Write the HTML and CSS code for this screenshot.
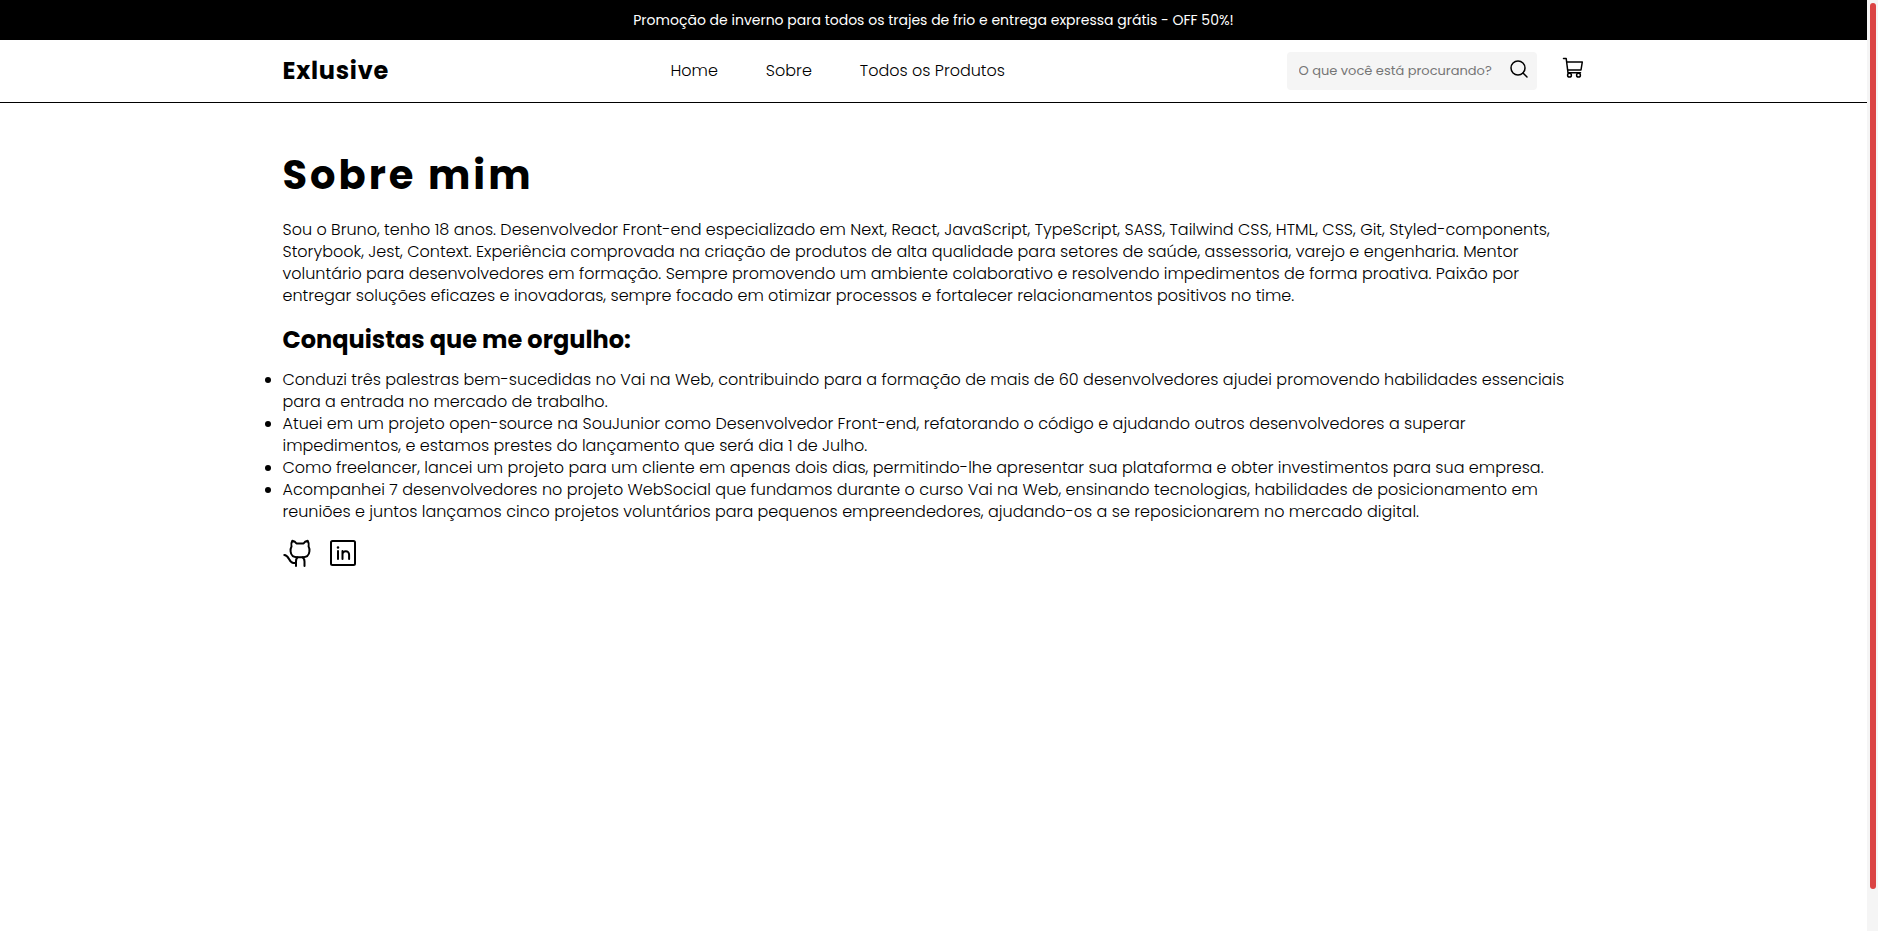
FILE: index.html
```html
<!DOCTYPE html>
<html lang="pt-BR">
<head>
<meta charset="utf-8">
<meta name="viewport" content="width=device-width, initial-scale=1">
<title>Exlusive - Sobre mim</title>
<link rel="stylesheet" href="styles.css">
</head>
<body>
<div class="page">
  <p class="promo">Promoção de inverno para todos os trajes de frio e entrega expressa grátis - OFF 50%!</p>
  <header class="header">
    <div class="container header-row">
      <a class="logo" href="#">Exlusive</a>
      <nav class="nav" aria-label="Principal">
        <a href="#">Home</a>
        <a href="#">Sobre</a>
        <a href="#">Todos os Produtos</a>
      </nav>
      <div class="actions">
        <form class="search" role="search">
          <input class="search-input" type="search" aria-label="Buscar produtos" placeholder="O que você está procurando?">
          <button class="icon-button" type="button" aria-label="Buscar">
            <svg width="24" height="24" viewBox="0 0 24 24" fill="none" stroke="currentColor" stroke-width="1.5" stroke-linecap="round" stroke-linejoin="round"><circle cx="11" cy="10" r="7"/><path d="M16 15l4 4"/></svg>
          </button>
        </form>
        <a class="cart" href="#" aria-label="Carrinho">
          <svg width="24" height="24" viewBox="0 0 24 24" fill="none" stroke="currentColor" stroke-width="1.5" stroke-linecap="round" stroke-linejoin="round"><path d="M2.500 2.500H5.200L7 16.800H19.500"/><path d="M5.700 6H21.300L20 14H6.700"/><circle cx="8.500" cy="19.200" r="1.900"/><circle cx="17.500" cy="19.200" r="1.900"/></svg>
        </a>
      </div>
    </div>
  </header>
  <main class="container about">
    <h1 class="title">Sobre mim</h1>
    <p class="bio">Sou o Bruno, tenho 18 anos. Desenvolvedor Front-end especializado em Next, React, JavaScript, TypeScript, SASS, Tailwind CSS, HTML, CSS, Git, Styled-components, Storybook, Jest, Context. Experiência comprovada na criação de produtos de alta qualidade para setores de saúde, assessoria, varejo e engenharia. Mentor voluntário para desenvolvedores em formação. Sempre promovendo um ambiente colaborativo e resolvendo impedimentos de forma proativa. Paixão por entregar soluções eficazes e inovadoras, sempre focado em otimizar processos e fortalecer relacionamentos positivos no time.</p>
    <h2 class="subtitle">Conquistas que me orgulho:</h2>
    <ul class="achievements">
      <li>Conduzi três palestras bem-sucedidas no Vai na Web, contribuindo para a formação de mais de 60 desenvolvedores ajudei promovendo habilidades essenciais para a entrada no mercado de trabalho.</li>
      <li>Atuei em um projeto open-source na SouJunior como Desenvolvedor Front-end, refatorando o código e ajudando outros desenvolvedores a superar impedimentos, e estamos prestes do lançamento que será dia 1 de Julho.</li>
      <li>Como freelancer, lancei um projeto para um cliente em apenas dois dias, permitindo-lhe apresentar sua plataforma e obter investimentos para sua empresa.</li>
      <li>Acompanhei 7 desenvolvedores no projeto WebSocial que fundamos durante o curso Vai na Web, ensinando tecnologias, habilidades de posicionamento em reuniões e juntos lançamos cinco projetos voluntários para pequenos empreendedores, ajudando-os a se reposicionarem no mercado digital.</li>
    </ul>
    <div class="social">
      <a href="#" aria-label="GitHub">
        <svg width="28" height="28" viewBox="0 0 28 28" fill="none" stroke="currentColor" stroke-width="2" stroke-linecap="round" stroke-linejoin="round"><path d="M9.300 1.700Q12 2.200 13.500 4.500H20.500Q22 2.200 24.700 1.700Q26.300 4.600 25.600 7.400Q26.800 9.500 26.400 12.500C26 16.500 23.500 18.300 19.500 18.300H14.500C10.500 18.300 8 16.500 7.600 12.500Q7.300 9.500 8.500 7.400Q7.700 4.600 9.300 1.700Z"/><path d="M13 27V22.500Q13 19.800 14.500 18.300M21.500 27V22.500Q21.500 19.800 19.500 18.300M13 24H10.500C5.500 24 6.500 16 1.300 16"/></svg>
      </a>
      <a href="#" aria-label="LinkedIn">
        <svg width="28" height="28" viewBox="0 0 28 28" fill="none" stroke="currentColor" stroke-width="2" stroke-linecap="round" stroke-linejoin="round"><rect x="2" y="2" width="24" height="24" rx="1.500"/><path d="M9 12v8M13.500 20v-8M13.500 15.500a3.300 3.300 0 0 1 6.600 0V20"/><circle cx="9" cy="8.500" r=".6" fill="currentColor" stroke-width="1.400"/></svg>
      </a>
    </div>
  </main>
</div>
<div class="scroll-track" aria-hidden="true"><div class="scroll-thumb"></div></div>
</body>
</html>
```
FILE: styles.css
```css
* {
  box-sizing: border-box;
  margin: 0;
  padding: 0;
}

body {
  display: flex;
  min-height: 100vh;
  background: #fff;
  color: #000;
  font-family: Poppins, Inter, "Open Sans", sans-serif;
  font-size: 16px;
  font-weight: 300;
  line-height: 22px;
}

a {
  color: inherit;
  text-decoration: none;
}

svg {
  display: block;
}

.page {
  flex: 1;
  min-width: 0;
}

.container {
  width: 100%;
  max-width: 1302px;
  margin: 0 auto;
}

.promo {
  padding: 9px 16px;
  background: #000;
  color: #fff;
  font-size: 14px;
  font-weight: 400;
  text-align: center;
}

.header {
  padding: 12px 0;
  border-bottom: 1px solid #000;
}

.header-row,
.nav,
.actions,
.search,
.social {
  display: flex;
  align-items: center;
}

.header-row {
  justify-content: space-between;
}

.logo {
  font-size: 24px;
  font-weight: 700;
  letter-spacing: 0.03em;
}

.nav {
  gap: 48px;
}

.actions {
  gap: 24px;
}

.cart {
  padding-bottom: 6px;
}

.search {
  width: 250px;
  height: 38px;
  padding: 0 6px 0 12px;
  border-radius: 4px;
  background: #f5f5f5;
}

.search-input {
  flex: 1;
  min-width: 0;
  border: 0;
  outline: 0;
  background: transparent;
  font: inherit;
  font-size: 13px;
  font-weight: 400;
}

.search-input::placeholder {
  color: #757575;
}

.icon-button {
  padding-bottom: 2px;
  border: 0;
  background: transparent;
  color: inherit;
}

.about {
  padding-top: 44px;
}

.title {
  font-size: 40px;
  font-weight: 700;
  letter-spacing: 3px;
  line-height: 56px;
}

.bio {
  margin-top: 16px;
}

.subtitle {
  margin: 16px 0 12px;
  font-size: 24px;
  font-weight: 700;
  line-height: 34px;
}

.social {
  gap: 18px;
  margin-top: 16px;
}

.scroll-track {
  width: 11px;
  padding: 3px 2px 0 3px;
  background: #f5f5f5;
}

.scroll-thumb {
  height: 886px;
  border-radius: 3px;
  background: #db4444;
}
```
